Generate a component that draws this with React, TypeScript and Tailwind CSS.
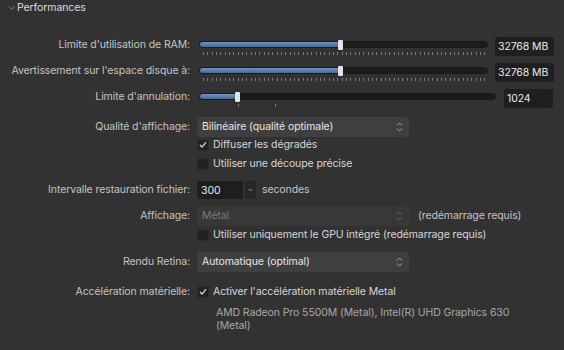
import React from "react";

const font = { fontFamily: "Inter, 'Noto Sans', sans-serif", letterSpacing: "-0.1px" };

function Ticks({ positions }: { positions: number[] }) {
  return (
    <>
      {positions.map((x, i) => (
        <div
          key={i}
          className="absolute top-[15px] w-px h-[3px] bg-[#7a7a7a]"
          style={{ left: x }}
        />
      ))}
    </>
  );
}

function Slider({ width, thumb, ticks }: { width: number; thumb: number; ticks: number[] }) {
  return (
    <div className="relative h-[19px] shrink-0" style={{ width }}>
      <div className="absolute left-0 right-0 top-[4px] h-[7px] rounded-full bg-[#1c1c1c] border border-[#191919]" />
      <div
        className="absolute left-[1px] top-[5px] h-[5px] rounded-l-full bg-gradient-to-b from-[#6c93c2] via-[#5a80ae] to-[#48688f]"
        style={{ width: thumb }}
      />
      <div
        className="absolute top-[3px] w-[5px] h-[10px] rounded-[1px] bg-[#e4e4e4] shadow-[0_0_1px_rgba(0,0,0,0.8)]"
        style={{ left: thumb - 1 }}
      />
      <Ticks positions={ticks} />
    </div>
  );
}

function ValueBox({ text, width }: { text: string; width: number }) {
  return (
    <div
      className="h-[19px] rounded-[2px] bg-[#1f1f1f] text-[#e8e8e8] text-[10.5px] flex items-center pl-[3px] shrink-0"
      style={{ width }}
    >
      {text}
    </div>
  );
}

function Label({ children }: { children: React.ReactNode }) {
  return <div className="w-[190px] shrink-0 text-right text-[10.5px] text-[#c4c4c4] leading-[14px] whitespace-nowrap">{children}</div>;
}

function Check({ checked }: { checked?: boolean }) {
  return (
    <div className="w-[12px] h-[12px] rounded-[2px] bg-[#222222] border border-[#2c2c2c] flex items-center justify-center shrink-0">
      {checked && (
        <svg width="8" height="8" viewBox="0 0 8 8">
          <path d="M1.3 4.3 L3.1 6.1 L6.7 1.7" stroke="#d8d8d8" strokeWidth="1.3" fill="none" strokeLinecap="round" strokeLinejoin="round" />
        </svg>
      )}
    </div>
  );
}

function UpDown({ color = "#a8a8a8" }: { color?: string }) {
  return (
    <svg width="7" height="12" viewBox="0 0 7 12">
      <path d="M1 4.5 L3.5 2 L6 4.5" stroke={color} strokeWidth="1" fill="none" />
      <path d="M1 7.5 L3.5 10 L6 7.5" stroke={color} strokeWidth="1" fill="none" />
    </svg>
  );
}

function Dropdown({ text, disabled }: { text: string; disabled?: boolean }) {
  return (
    <div
      className={`w-[212px] h-[20px] rounded-[3px] flex items-center justify-between pl-[5px] pr-[6px] text-[10.5px] ${
        disabled ? "bg-[#383838] text-[#7b7b7b]" : "bg-[#3f3f3f] text-[#e6e6e6]"
      }`}
    >
      <span>{text}</span>
      <UpDown color={disabled ? "#6a6a6a" : "#a8a8a8"} />
    </div>
  );
}

function CheckRow({ checked, text, top }: { checked?: boolean; text: string; top: number }) {
  return (
    <div className="flex items-center h-[12px]" style={{ marginTop: top }}>
      <div className="w-[197px] shrink-0" />
      <Check checked={checked} />
      <span className="ml-[4px] text-[10.5px] text-[#d6d6d6] whitespace-nowrap">{text}</span>
    </div>
  );
}

export default function App() {
  const ticks1 = Array.from({ length: 66 }, (_, i) => Math.round(4 + i * 4.33));
  return (
    <div className="w-[564px] h-[350px] bg-[#323232] overflow-hidden" style={font}>
      {/* header */}
      <div className="flex items-center h-[15px]">
        <svg className="ml-[8px]" width="7" height="6" viewBox="0 0 7 6">
          <path d="M0.8 1.5 L3.5 4.3 L6.2 1.5" stroke="#8a8a8a" strokeWidth="1" fill="none" />
        </svg>
        <span className="ml-[2px] text-[10.5px] text-[#dcdcdc]">Performances</span>
      </div>

      {/* RAM */}
      <div className="flex items-start mt-[22px] h-[19px]">
        <div className="mt-[1px]"><Label>Limite d'utilisation de RAM:</Label></div>
        <div className="ml-[9px]"><Slider width={289} thumb={140} ticks={ticks1} /></div>
        <div className="ml-[7px]"><ValueBox text="32768 MB" width={59} /></div>
      </div>

      {/* Disk */}
      <div className="flex items-start mt-[7px] h-[19px]">
        <div className="mt-[1px]"><Label>Avertissement sur l'espace disque à:</Label></div>
        <div className="ml-[9px]"><Slider width={289} thumb={140} ticks={ticks1} /></div>
        <div className="ml-[7px]"><ValueBox text="32768 MB" width={59} /></div>
      </div>

      {/* Undo */}
      <div className="flex items-start mt-[7px] h-[19px]">
        <div className="mt-[1px]"><Label>Limite d'annulation:</Label></div>
        <div className="ml-[9px]"><Slider width={297} thumb={37} ticks={[39, 76]} /></div>
        <div className="ml-[8px]"><ValueBox text="1024" width={49} /></div>
      </div>

      {/* Qualité */}
      <div className="flex items-center mt-[9px] h-[20px]">
        <Label>Qualité d'affichage:</Label>
        <div className="ml-[7px]"><Dropdown text="Bilinéaire (qualité optimale)" /></div>
      </div>
      <CheckRow checked text="Diffuser les dégradés" top={2} />
      <CheckRow text="Utiliser une découpe précise" top={7} />

      {/* Intervalle */}
      <div className="flex items-center mt-[11px] h-[18px]">
        <Label>Intervalle restauration fichier:</Label>
        <div className="ml-[7px] flex items-center">
          <div className="w-[46px] h-[18px] bg-[#1e1e1e] rounded-l-[2px] text-[10.5px] text-[#e8e8e8] flex items-center pl-[4px] pt-[2px]">300</div>
          <div className="ml-[2px] w-[11px] h-[18px] bg-[#262626] rounded-r-[2px] flex items-center justify-center">
            <svg width="5" height="4" viewBox="0 0 5 4">
              <path d="M0.5 1 L2.5 3 L4.5 1" stroke="#9a9a9a" strokeWidth="0.9" fill="none" />
            </svg>
          </div>
          <span className="ml-[6px] text-[10.5px] text-[#c4c4c4]">secondes</span>
        </div>
      </div>

      {/* Affichage */}
      <div className="flex items-center mt-[7px] h-[20px]">
        <Label>Affichage:</Label>
        <div className="ml-[7px]"><Dropdown text="Métal" disabled /></div>
        <span className="ml-[9px] text-[10.5px] text-[#c4c4c4] whitespace-nowrap">(redémarrage requis)</span>
      </div>
      <CheckRow text="Utiliser uniquement le GPU intégré (redémarrage requis)" top={3} />

      {/* Retina */}
      <div className="flex items-center mt-[11px] h-[20px]">
        <Label>Rendu Retina:</Label>
        <div className="ml-[7px]"><Dropdown text="Automatique (optimal)" /></div>
      </div>

      {/* Accélération */}
      <div className="flex items-center mt-[14px] h-[12px]">
        <Label>Accélération matérielle:</Label>
        <div className="ml-[7px] flex items-center">
          <Check checked />
          <span className="ml-[4px] text-[10.5px] text-[#d6d6d6] whitespace-nowrap">Activer l'accélération matérielle Metal</span>
        </div>
      </div>
      <div className="ml-[216px] mt-[8px] text-[10.5px] leading-[13px] text-[#a8a8a8] whitespace-nowrap">
        AMD Radeon Pro 5500M (Metal), Intel(R) UHD Graphics 630
        <br />
        (Metal)
      </div>
    </div>
  );
}
